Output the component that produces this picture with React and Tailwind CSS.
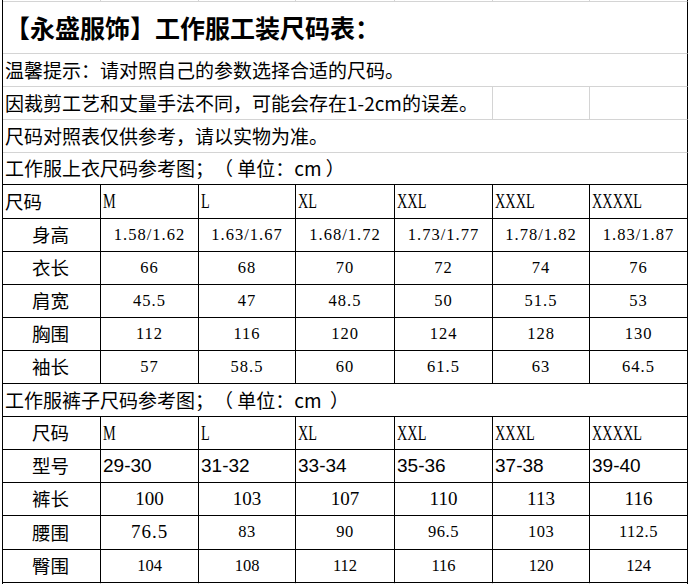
import React from "react";

const cjk = "font-['Noto_Sans_CJK_SC',sans-serif]";
const serif = "font-['Liberation_Serif','Noto_Sans_CJK_SC',serif]";
const sans = "font-['Liberation_Sans',sans-serif]";

const sizes = ["M", "L", "XL", "XXL", "XXXL", "XXXXL"];

const topRows = [
  ["身高", ["1.58/1.62", "1.63/1.67", "1.68/1.72", "1.73/1.77", "1.78/1.82", "1.83/1.87"]],
  ["衣长", ["66", "68", "70", "72", "74", "76"]],
  ["肩宽", ["45.5", "47", "48.5", "50", "51.5", "53"]],
  ["胸围", ["112", "116", "120", "124", "128", "130"]],
  ["袖长", ["57", "58.5", "60", "61.5", "63", "64.5"]],
];

const grid = "grid grid-cols-[98px_98px_97px_99px_98px_97px_98px]";

// light grid line cell (spreadsheet gridlines)
const Gray = ({ span = "", last, h, children, className = "" }) => (
  <div
    className={`${span} ${h} flex items-center border-b border-r border-b-[#d4d4d4] ${
      last ? "border-r-black" : "border-r-[#d4d4d4]"
    } ${className}`}
  >
    {children}
  </div>
);

const Cell = ({ h = "h-[33px]", className = "", children }) => (
  <div className={`${h} flex items-center border-b border-r border-black ${className}`}>
    {children}
  </div>
);

const SizeHead = ({ children }) => (
  <span className={`${serif} inline-block origin-left scale-x-[0.68] text-[21px] leading-none`}>
    {children}
  </span>
);

const Label = ({ children, left }) => (
  <Cell className={`${cjk} text-[18.5px] ${left ? "pl-[2px]" : "justify-center pr-[2px]"}`}>
    {children}
  </Cell>
);

const App = () => {
  return (
    <div className="w-[690px] h-[584px] bg-white text-black overflow-hidden [text-spacing-trim:space-all]">
      <div className={`${grid} ml-[2px] w-[686px] border-l border-black`}>
        {/* top sliver of previous spreadsheet row */}
        {[0, 1, 2, 3, 4, 5, 6].map((i) => (
          <Gray key={i} h="h-[2px]" last={i === 6} />
        ))}

        <Gray span="col-span-7" last h="h-[52px]" className={`${cjk} pl-[2px] text-[25px] font-bold`}>
          【永盛服饰】工作服工装尺码表：
        </Gray>
        <Gray span="col-span-7" last h="h-[33px]" className={`${cjk} pl-[2px] text-[19px]`}>
          温馨提示：请对照自己的参数选择合适的尺码。
        </Gray>
        <Gray span="col-span-5" h="h-[33px]" className={`${cjk} pl-[2px] text-[19px] whitespace-nowrap`}>
          因裁剪工艺和丈量手法不同，可能会存在1-2cm的误差。
        </Gray>
        <Gray h="h-[33px]" />
        <Gray last h="h-[33px]" />
        <Gray span="col-span-7" last h="h-[33px]" className={`${cjk} pl-[2px] text-[19px]`}>
          尺码对照表仅供参考，请以实物为准。
        </Gray>
        <div
          className={`col-span-7 h-[32px] flex items-center border-b border-r border-black ${cjk} pl-[2px] text-[19px] whitespace-pre`}
        >
          工作服上衣尺码参考图；（ 单位：cm ）
        </div>

        {/* 上衣 table */}
        <Cell h="h-[34px]" className={`${cjk} text-[18.5px] pl-[2px]`}>
          尺码
        </Cell>
        {sizes.map((s) => (
          <Cell key={s} h="h-[34px]" className="pl-[2px]">
            <SizeHead>{s}</SizeHead>
          </Cell>
        ))}
        {topRows.map(([label, vals]) => (
          <React.Fragment key={label}>
            <Label>{label}</Label>
            {vals.map((v, i) => (
              <Cell key={i} className={`${serif} justify-center text-[16.5px] tracking-[1px]`}>
                {v}
              </Cell>
            ))}
          </React.Fragment>
        ))}

        <div
          className={`col-span-7 h-[33px] flex items-center border-b border-r border-black ${cjk} pl-[2px] text-[19px] whitespace-pre`}
        >
          工作服裤子尺码参考图；（ 单位：cm  ）
        </div>

        {/* 裤子 table */}
        <Label>尺码</Label>
        {sizes.map((s) => (
          <Cell key={s} className="pl-[2px]">
            <SizeHead>{s}</SizeHead>
          </Cell>
        ))}

        <Label>型号</Label>
        {["29-30", "31-32", "33-34", "35-36", "37-38", "39-40"].map((v) => (
          <Cell key={v} className={`${sans} pl-[2px] text-[19px]`}>
            {v}
          </Cell>
        ))}

        <Label>裤长</Label>
        {["100", "103", "107", "110", "113", "116"].map((v) => (
          <Cell key={v} className={`${serif} justify-center text-[19px]`}>
            {v}
          </Cell>
        ))}

        <Cell h="h-[34px]" className={`${cjk} text-[18.5px] justify-center pr-[2px]`}>
          腰围
        </Cell>
        {["76.5", "83", "90", "96.5", "103", "112.5"].map((v, i) => (
          <Cell
            key={v}
            h="h-[34px]"
            className={`${serif} justify-center ${i === 0 ? "text-[19px] tracking-[1px]" : "text-[16.5px] tracking-[0.5px]"}`}
          >
            {v}
          </Cell>
        ))}

        <Label>臀围</Label>
        {["104", "108", "112", "116", "120", "124"].map((v) => (
          <Cell key={v} className={`${serif} justify-center text-[16.5px]`}>
            {v}
          </Cell>
        ))}

        {/* sliver of next row */}
        {[0, 1, 2, 3, 4, 5, 6].map((i) => (
          <div
            key={i}
            className={`h-[2px] border-r ${i === 6 ? "border-r-black" : "border-r-[#d4d4d4]"}`}
          />
        ))}
      </div>
    </div>
  );
};

export default App;
